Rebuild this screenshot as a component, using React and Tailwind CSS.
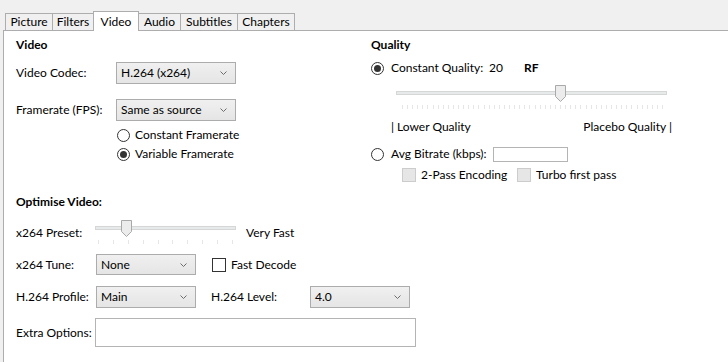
// Video settings tab — recreation of a Windows-style encoder panel

const TABS = [
  { label: "Picture", w: "w-[48px]" },
  { label: "Filters", w: "w-[42px]" },
  { label: "Video", w: "w-[46px]", active: true },
  { label: "Audio", w: "w-[43px]" },
  { label: "Subtitles", w: "w-[58px]" },
  { label: "Chapters", w: "w-[58px]" },
];

// ─── small controls ──────────────────────────────────────────────────────────

function Chevron() {
  return (
    <svg width="7" height="4" viewBox="0 0 7 4" className="block">
      <polyline points="0.5,0.5 3.5,3.5 6.5,0.5" fill="none" stroke="#6d6d6d" strokeWidth="1" />
    </svg>
  );
}

function Combo({ value, w, h = "h-[22px]" }) {
  return (
    <div className={`${w} ${h} shrink-0 border border-[#acacac] bg-linear-to-b from-[#f0f0f0] to-[#e5e5e5] flex items-center justify-between pl-[4px] pr-[8px]`}>
      <span className="leading-[16px]">{value}</span>
      <Chevron />
    </div>
  );
}

function Radio({ checked }) {
  return (
    <span className="w-[13px] h-[13px] shrink-0 rounded-full border border-[#333333] bg-white flex items-center justify-center">
      {checked && <span className="w-[7px] h-[7px] rounded-full bg-[#333333]" />}
    </span>
  );
}

function Check({ disabled }) {
  return (
    <span
      className={
        disabled
          ? "block w-[14px] h-[14px] shrink-0 border border-[#cccccc] bg-[#e6e6e6]"
          : "block w-[14px] h-[14px] shrink-0 border border-[#333333] bg-white"
      }
    />
  );
}

function Slider({ width, ticks, first, last, thumb }) {
  const step = (last - first) / (ticks - 1);
  return (
    <svg width={width} height="26" className="block shrink-0">
      <rect x="0.5" y="6.5" width={width - 1} height="3" fill="#e7eaea" stroke="#d6d6d6" />
      {Array.from({ length: ticks }, (_, i) => {
        const x = Math.round(first + i * step) + 0.5;
        return <line key={i} x1={x} x2={x} y1="20" y2="24" stroke="#e6e6e6" />;
      })}
      <path
        d={`M${thumb + 0.5} 0.5 H${thumb + 10.5} V11.5 L${thumb + 5.5} 16.5 L${thumb + 0.5} 11.5 Z`}
        fill="#ececec"
        stroke="#a9a9a9"
      />
    </svg>
  );
}

// ─── App ─────────────────────────────────────────────────────────────────────

export default function App() {
  return (
    <div className="w-[728px] h-[362px] overflow-hidden bg-[#f0f0f0] text-[12px] text-black font-[Lato,sans-serif]">
      {/* Tabs */}
      <div className="h-[30px] flex items-end pl-[5px]">
        {TABS.map((t, i) => (
          <div
            key={t.label}
            className={
              t.active
                ? `${t.w} h-[20px] -mb-px ${i ? "-ml-px" : ""} relative z-10 bg-white border border-b-0 border-[#adadad] flex items-center justify-center`
                : `${t.w} h-[17px] ${i ? "-ml-px" : ""} bg-[#f0f0f0] border border-b-0 border-[#adadad] flex items-center justify-center`
            }
          >
            <span className="leading-[16px]">{t.label}</span>
          </div>
        ))}
      </div>

      {/* Panel */}
      <div className="ml-[3px] h-[332px] bg-white border-l border-t border-[#adadad] pl-[12px]">
        {/* Top: video + quality */}
        <div className="flex items-start">
          {/* Video */}
          <div className="w-[355px] shrink-0 flex flex-col">
            <div className="mt-[6px] h-[16px] leading-[16px] font-bold">Video</div>
            <div className="mt-[9px] flex items-center">
              <span className="w-[100px] shrink-0">Video Codec:</span>
              <Combo value="H.264 (x264)" w="w-[120px]" />
            </div>
            <div className="mt-[15px] flex items-center">
              <span className="w-[100px] shrink-0">Framerate (FPS):</span>
              <Combo value="Same as source" w="w-[120px]" />
            </div>
            <div className="mt-[6px] ml-[101px] h-[16px] flex items-center gap-[5px]">
              <Radio />
              <span>Constant Framerate</span>
            </div>
            <div className="mt-[3px] ml-[101px] h-[16px] flex items-center gap-[5px]">
              <Radio checked />
              <span>Variable Framerate</span>
            </div>
          </div>

          {/* Quality */}
          <div className="flex flex-col">
            <div className="mt-[6px] h-[16px] leading-[16px] font-bold">Quality</div>
            <div className="mt-[7px] h-[16px] flex items-center">
              <Radio checked />
              <span className="ml-[7px] w-[98px]">Constant Quality:</span>
              <span className="w-[35px]">20</span>
              <span className="font-bold">RF</span>
            </div>
            <div className="mt-[9px] ml-[25px]">
              <Slider width={271} ticks={52} first={6} last={266} thumb={159} />
            </div>
            <div className="mt-[8px] ml-[20px] w-[281px] h-[16px] flex items-center justify-between">
              <span>| Lower Quality</span>
              <span>Placebo Quality |</span>
            </div>
            <div className="mt-[11px] h-[16px] flex items-center">
              <Radio />
              <span className="ml-[7px] w-[102px]">Avg Bitrate (kbps):</span>
              <span className="w-[75px] h-[15px] border border-[#b4b4b4] bg-white" />
            </div>
            <div className="mt-[5px] ml-[31px] h-[16px] flex items-center">
              <Check disabled />
              <span className="ml-[5px] w-[96px]">2-Pass Encoding</span>
              <Check disabled />
              <span className="ml-[5px]">Turbo first pass</span>
            </div>
          </div>
        </div>

        {/* Optimise video */}
        <div className="flex flex-col">
          <div className="mt-[11px] h-[16px] leading-[16px] font-bold">Optimise Video:</div>
          <div className="mt-[10px] h-[26px] flex items-start">
            <span className="w-[79px] shrink-0 mt-[5px] leading-[16px]">x264 Preset:</span>
            <Slider width={141} ticks={10} first={3} last={137} thumb={26} />
            <span className="ml-[10px] mt-[5px] leading-[16px]">Very Fast</span>
          </div>
          <div className="mt-[8px] flex items-center">
            <span className="w-[80px] shrink-0">x264 Tune:</span>
            <Combo value="None" w="w-[100px]" h="h-[21px]" />
            <span className="ml-[16px]"><Check /></span>
            <span className="ml-[5px]">Fast Decode</span>
          </div>
          <div className="mt-[11px] flex items-center">
            <span className="w-[80px] shrink-0">H.264 Profile:</span>
            <Combo value="Main" w="w-[100px]" />
            <span className="ml-[15px] w-[99px] shrink-0">H.264 Level:</span>
            <Combo value="4.0" w="w-[100px]" />
          </div>
          <div className="mt-[10px] flex items-center">
            <span className="w-[79px] shrink-0">Extra Options:</span>
            <span className="w-[321px] h-[29px] border border-[#b4b4b4] bg-white" />
          </div>
        </div>
      </div>
    </div>
  );
}
